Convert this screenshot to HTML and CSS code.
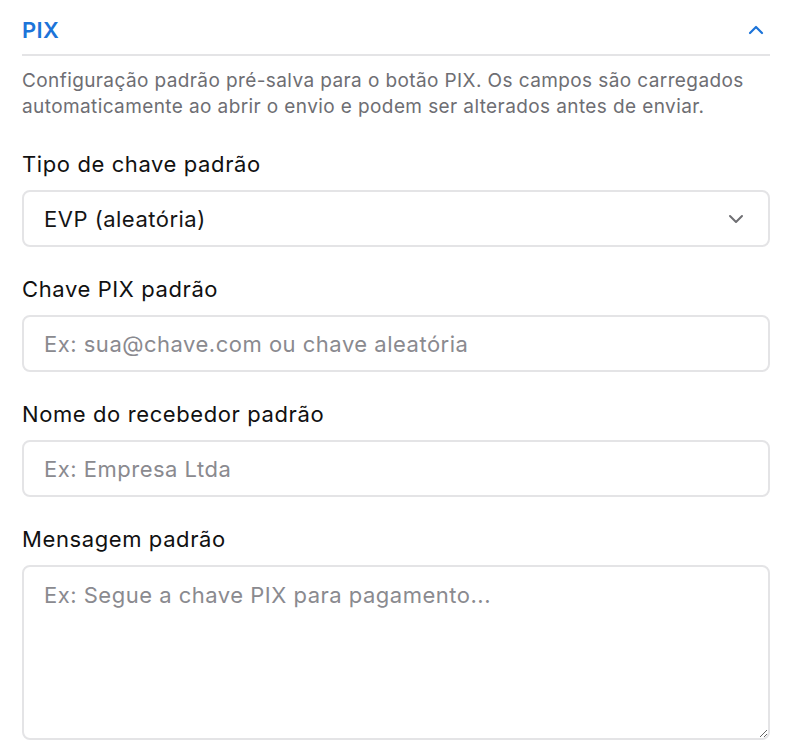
FILE: index.html
```html
<!DOCTYPE html>
<html lang="pt-BR">
<head>
  <meta charset="UTF-8" />
  <meta name="viewport" content="width=device-width, initial-scale=1.0"/>
  <title>PIX</title>
  <link rel="stylesheet" href="styles.css">
</head>
<body>

  <!-- pix section -->
  <section class="panel">
    <div class="panel-head">
      <span class="panel-title">PIX</span>
      <svg class="chev-up" width="16" height="10" viewBox="0 0 16 10"><path d="M2 8 L8 2 L14 8" fill="none" stroke="#1c74d9" stroke-width="2.2" stroke-linecap="round" stroke-linejoin="round"/></svg>
    </div>

    <p class="hint">Configuração padrão pré-salva para o botão PIX. Os campos são carregados automaticamente ao abrir o envio e podem ser alterados antes de enviar.</p>

    <div class="field">
      <label for="keyType">Tipo de chave padrão</label>
      <div class="select-wrap">
        <select id="keyType">
          <option>EVP (aleatória)</option>
          <option>CPF</option>
          <option>CNPJ</option>
          <option>E-mail</option>
          <option>Telefone</option>
        </select>
        <svg class="chev-down" width="16" height="10" viewBox="0 0 16 10"><path d="M2 2 L8 8 L14 2" fill="none" stroke="#6f6f73" stroke-width="2" stroke-linecap="round" stroke-linejoin="round"/></svg>
      </div>
    </div>

    <div class="field">
      <label for="pixKey">Chave PIX padrão</label>
      <input type="text" id="pixKey" placeholder="Ex: sua@chave.com ou chave aleatória" />
    </div>

    <div class="field">
      <label for="receiver">Nome do recebedor padrão</label>
      <input type="text" id="receiver" placeholder="Ex: Empresa Ltda" />
    </div>

    <div class="field">
      <label for="message">Mensagem padrão</label>
      <textarea id="message" placeholder="Ex: Segue a chave PIX para pagamento..."></textarea>
    </div>
  </section>

</body>
</html>
```

FILE: styles.css
```css
/* page */
body {
  margin: 0;
  background: #fff;
  color: #111;
  font-family: Inter, "Noto Sans", sans-serif;
}
.panel { padding: 0 20px 0 22px; }

/* header */
.panel-head {
  display: flex; align-items: center; justify-content: space-between;
  padding: 18px 6px 12px 0;
  border-bottom: 2px solid #e4e4e6;
}
.panel-title {
  font-size: 22px; line-height: 24px; font-weight: 600;
  letter-spacing: 0.3px;
  color: #1c74d9;
}
.hint {
  margin: 12px 0 31px;
  font-size: 19px; line-height: 26px; letter-spacing: 0.4px;
  color: #6e6e73;
}

/* fields */
.field { display: flex; flex-direction: column; gap: 13px; margin-bottom: 29px; }
.field label {
  font-size: 22px; line-height: 26px; font-weight: 400; letter-spacing: 0.6px;
  color: #111;
}
.field input, .field select, .field textarea {
  box-sizing: border-box; width: 100%;
  font-family: inherit; font-size: 22px; letter-spacing: 0.5px; color: #151515;
  background: #fff;
  border: 2px solid #e4e4e6; border-radius: 8px;
  padding: 0 20px;
  outline: none;
}
.field input, .field select { height: 57px; }
.field select { appearance: none; -webkit-appearance: none; }
.field textarea {
  height: 175px; padding: 13px 20px; line-height: 30px;
  resize: vertical;
}
::placeholder { color: #8a8a8f; }

.select-wrap { position: relative; }
.chev-down { position: absolute; right: 26px; top: 24px; pointer-events: none; }
```
